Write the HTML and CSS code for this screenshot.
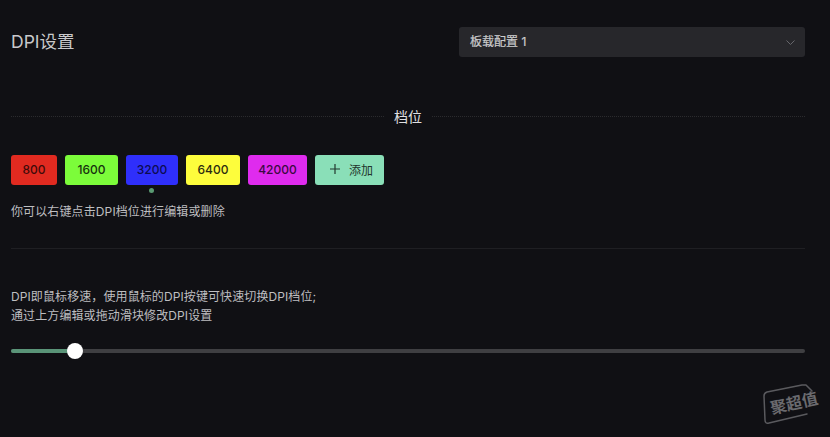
FILE: index.html
```html
<!DOCTYPE html>
<html lang="zh-CN">
<head>
<meta charset="utf-8">
<title>DPI设置</title>
<link rel="stylesheet" href="styles.css">
</head>
<body>
<main class="page">
  <header class="head">
    <h1 class="title">DPI设置</h1>
    <div class="select">
      <span class="select-text">板载配置 1</span>
      <svg class="chev" width="9" height="5" viewBox="0 0 9 5"><path d="M.5.5 4.5 4.5 8.5.5" fill="none" stroke="#66666b" stroke-width="1"/></svg>
    </div>
  </header>
  <div class="divider"><span class="dash first"></span><span class="divider-text">档位</span><span class="dash"></span></div>
  <div class="levels">
    <button class="chip red">800</button>
    <button class="chip green">1600</button>
    <button class="chip blue active">3200</button>
    <button class="chip yellow">6400</button>
    <button class="chip magenta">42000</button>
    <button class="add"><svg width="10" height="10" viewBox="0 0 10 10"><path d="M5 0v10M0 5h10" stroke="#23382e" stroke-width="1.2"/></svg><span>添加</span></button>
  </div>
  <p class="hint">你可以右键点击DPI档位进行编辑或删除</p>
  <hr class="rule">
  <p class="desc">DPI即鼠标移速，使用鼠标的DPI按键可快速切换DPI档位;<br>通过上方编辑或拖动滑块修改DPI设置</p>
  <div class="slider"><div class="fill"></div><div class="thumb"></div></div>
</main>
<div class="mark">
  <svg class="mark-tag" width="60" height="44" viewBox="0 0 60 44"><path d="M51 7 45 1 41 1 6 8Q3 9 3 12L4 36Q4 40 8 39L46 30" fill="none" stroke="#5a5a5e" stroke-width="1.5" stroke-linejoin="round" stroke-linecap="round"/></svg>
  <span class="mark-text">聚超值</span>
</div>
</body>
</html>
```
FILE: styles.css
```css
* { box-sizing: border-box; }
html, body { margin: 0; height: 100%; }
body {
  background: #101014;
  color: #cfcfd1;
  font-family: "Inter", "Noto Sans CJK SC", sans-serif;
  overflow: hidden;
  position: relative;
}
.page { padding: 27px 25px 0 11px; }
.head { display: flex; justify-content: space-between; align-items: center; height: 30px; }
.title { margin: 0; font-size: 17.5px; line-height: 28px; font-weight: 400; color: #c9c9cb; }
.select {
  width: 346px; height: 30px; padding: 0 10px 0 11px;
  background: #27272b; border-radius: 3px;
  display: flex; align-items: center; justify-content: space-between;
  font-size: 12px; line-height: 26px; color: #cbcbcd;
}
.select-text { padding-bottom: 1px; -webkit-text-stroke: 0.2px #cbcbcd; }
.divider { display: flex; align-items: center; margin-top: 49px; height: 20px; }
.dash { flex: 1; border-top: 1px dotted #2b2b2e; }
.dash.first { flex: 0 0 373px; }
.divider-text { padding: 0 10px; font-size: 14px; color: #e0e0e2; }
.levels { display: flex; gap: 8px; margin-top: 29px; }
.chip, .add {
  height: 30px; border: 0; border-radius: 3px; padding: 0 0 2px;
  font-family: inherit; font-size: 12px; font-weight: 500; color: #26262a;
}
.chip { position: relative; }
.red { width: 46px; background: #e12a20; color: #3f0a0a; }
.green { width: 53px; background: #7cfc3a; color: #17300f; }
.blue { width: 52px; background: #2f2ffb; color: #0c0c52; }
.yellow { width: 54px; background: #fdfd3c; color: #2c2c10; }
.magenta { width: 59px; background: #df2bee; color: #3b0a42; }
.active::after {
  content: ""; position: absolute; left: 23px; top: 33px;
  width: 5px; height: 5px; border-radius: 50%; background: #5a9a72;
}
.add {
  width: 69px; background: #8adfb8; color: #22352c;
  display: flex; align-items: center; gap: 9px; padding: 0 0 2px 15px; font-weight: 400;
}
.hint { margin: 18px 0 0; font-size: 12px; line-height: 17px; letter-spacing: 0.12px; color: #bebec0; }
.rule { margin: 28px 0 0; border: 0; border-top: 1px solid #1f1f23; }
.desc { margin: 38px 0 0; font-size: 12px; line-height: 19px; letter-spacing: 0.1px; color: #bebec0; }
.slider { position: relative; height: 4px; margin-top: 24px; background: #3f3f42; border-radius: 2px; }
.fill { width: 64px; height: 100%; background: #5a9478; border-radius: 2px; }
.thumb {
  position: absolute; left: 56px; top: -6px;
  width: 16px; height: 16px; border-radius: 50%; background: #fff;
}
.mark { position: absolute; left: 761px; top: 384px; width: 60px; height: 44px; }
.mark-tag { display: block; }
.mark-text {
  position: absolute; left: 9px; top: 8px;
  font-size: 16px; line-height: 22px; font-weight: 700; color: #6a6a6e; white-space: nowrap;
  transform: rotate(-13deg);
}
```
